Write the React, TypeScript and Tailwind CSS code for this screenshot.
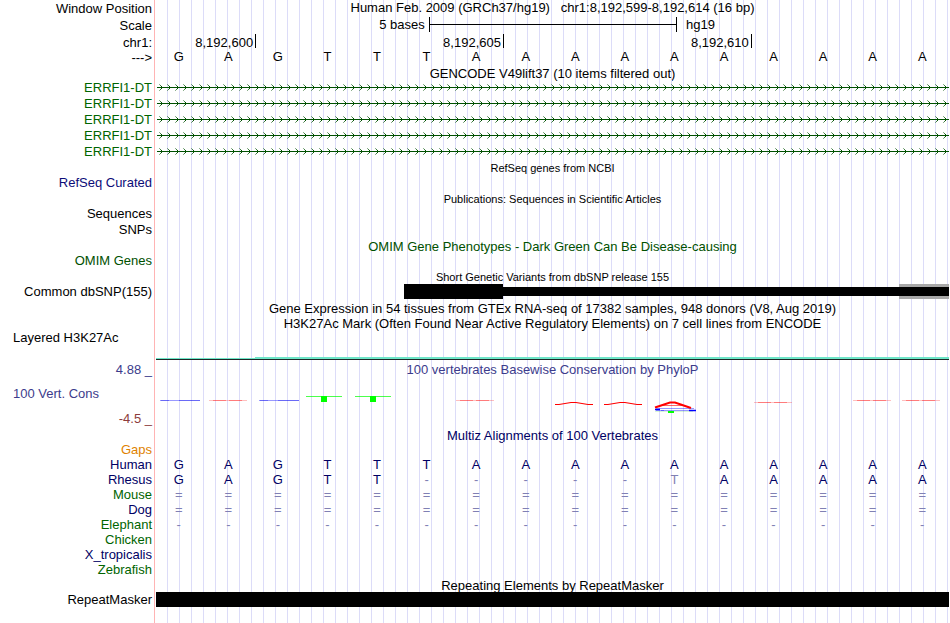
import React from 'react';
import clsx from 'clsx';

type BaseTone = 'black' | 'navy';

interface RowProps {
  label?: React.ReactNode;
  labelClass?: string;
  className?: string;
  children?: React.ReactNode;
}

interface Species {
  name: string;
  color: string;
  bases: string;
  faint?: number[];
}

const REFERENCE = 'GAGTTTAAAAAAAAAA';

const species: Species[] = [
  { name: 'Human', color: 'text-[#000064]', bases: REFERENCE },
  { name: 'Rhesus', color: 'text-[#000064]', bases: 'GAGTT-----TAAAAA', faint: [10] },
  { name: 'Mouse', color: 'text-[#006400]', bases: '================' },
  { name: 'Dog', color: 'text-[#000064]', bases: '================' },
  { name: 'Elephant', color: 'text-[#006400]', bases: '----------------' },
  { name: 'Chicken', color: 'text-[#006400]', bases: '' },
  { name: 'X_tropicalis', color: 'text-[#000064]', bases: '' },
  { name: 'Zebrafish', color: 'text-[#006400]', bases: '' },
];

const transcripts = ['tx1', 'tx2', 'tx3', 'tx4', 'tx5'];

// One label cell on the left, one track cell with the guide lines on the right
const Row: React.FC<RowProps> = ({
  label,
  labelClass = 'text-right',
  className = 'h-4 leading-4',
  children,
}) => (
  <div className={clsx('flex', className)}>
    <div className={clsx('w-[154px] shrink-0 pr-0.5 whitespace-nowrap', labelClass)}>{label}</div>
    <div className="flex min-w-0 flex-1 border-l border-[#ffb4b4] pl-px">
      <div className="min-w-0 flex-1 bg-[repeating-linear-gradient(90deg,transparent_0_11px,#dcdcf8_11px_12px)]">
        {children}
      </div>
    </div>
  </div>
);

const Title: React.FC<{
  children: React.ReactNode;
  small?: boolean;
  className?: string;
}> = ({ children, small, className }) => (
  <h2 className={clsx('text-center whitespace-nowrap', small && 'text-[11px]', className)}>
    {children}
  </h2>
);

const TitleRow: React.FC<{
  children: React.ReactNode;
  small?: boolean;
  color?: string;
  height?: string;
}> = ({ children, small, color, height = 'h-[15px] leading-[17px]' }) => (
  <Row className={height}>
    <Title small={small} className={color}>
      {children}
    </Title>
  </Row>
);

const Bases: React.FC<{ bases: string; tone: BaseTone; faint?: number[] }> = ({
  bases,
  tone,
  faint = [],
}) => (
  <div className="grid grid-cols-16 text-center">
    {bases.split('').map((base, i) => {
      const isFaint = base === '-' || base === '=' || faint.includes(i);
      return (
        <span
          key={i}
          className={clsx(
            'pr-1',
            tone === 'black' && 'text-black',
            tone === 'navy' && (isFaint ? 'text-[#8080b4]' : 'text-[#000064]')
          )}
        >
          {base}
        </span>
      );
    })}
  </div>
);

const Transcript: React.FC<{ id: string }> = ({ id }) => (
  <svg className="block h-4 w-full" shapeRendering="crispEdges" aria-hidden="true">
    <defs>
      <pattern id={id} width="8" height="16" patternUnits="userSpaceOnUse">
        <g fill="#005000">
          <path d="M6 7h1v1h-1z M5 6h1v1h-1z M5 8h1v1h-1z" />
          <path d="M4 5h1v1h-1z M4 9h1v1h-1z" fillOpacity="0.75" />
          <path d="M3 4h1v1h-1z M3 10h1v1h-1z" fillOpacity="0.45" />
        </g>
      </pattern>
    </defs>
    <rect width="100%" height="16" fill={`url(#${id})`} />
    <rect x="1" y="7" width="100%" height="1" fill="#005000" />
  </svg>
);

const Glyph: React.FC<{ children?: React.ReactNode }> = ({ children }) => (
  <svg className="block h-[51px] w-full overflow-visible" fill="none" aria-hidden="true">
    {children}
  </svg>
);

const FlatG = () => (
  <Glyph>
    <path d="M4 23.5h40" stroke="#0000ff" strokeOpacity="0.4" />
    <path d="M5 23.5h8 M23 23.5h21" stroke="#0000e0" strokeOpacity="0.3" />
  </Glyph>
);

const FlatA: React.FC<{ y?: number }> = ({ y = 23.5 }) => (
  <Glyph>
    <path d={`M3 ${y}h38`} stroke="#ff0000" strokeOpacity="0.25" />
    <path d={`M7 ${y}h13 M23 ${y}h13`} stroke="#ff0000" strokeOpacity="0.35" />
  </Glyph>
);

const LowT = () => (
  <Glyph>
    <path d="M1 19.5h36" stroke="#00ff00" strokeOpacity="0.7" />
    <path d="M16 19h6v6h-6z" fill="#00ff00" />
  </Glyph>
);

const LowA = () => (
  <Glyph>
    <path d="M2 27.5h4L18 25.5h5L35 27.5h5" stroke="#ff0000" strokeWidth="1.2" />
  </Glyph>
);

// Stacked A / C / T
const StackedA = () => (
  <Glyph>
    <path d="M3 34.5h38" stroke="#00c000" strokeOpacity="0.15" />
    <path d="M16 34h6v2h-6z" fill="#00ff00" />
    <path d="M4 31.5h38 M9 33.5h30 M4 33.5h8" stroke="#0000ff" strokeOpacity="0.4" />
    <path d="M3 32.5h5 M37 33.5h7" stroke="#0000ff" strokeWidth="1.5" />
    <path d="M11 28.5h20" stroke="#ff0000" strokeOpacity="0.6" />
    <path d="M3 30.5 18 25.5h5L39 31" stroke="#ff0000" strokeWidth="2" />
  </Glyph>
);

const App: React.FC = () => {
  return (
    <main className="flex min-h-screen flex-col bg-white pr-px font-['Liberation_Sans',Arial,sans-serif] text-[13px] text-black">
      <Row label="Window Position" className="h-[17px] leading-[18px]">
        <Title className="leading-4">
          Human Feb. 2009 (GRCh37/hg19)&nbsp;&nbsp; chr1:8,192,599-8,192,614 (16 bp)
        </Title>
      </Row>
      <Row label="Scale" className="h-[17px] leading-[18px]">
        <div className="flex leading-4">
          <span className="w-[34.4%] pr-1 text-right">5 bases</span>
          <div className="h-[15px] w-[31.3%] border-x border-black pt-[7px]">
            <div className="h-px bg-black" />
          </div>
          <span className="pl-[9px]">hg19</span>
        </div>
      </Row>
      <Row label="chr1:" className="h-4 leading-[17px]">
        <div className="grid grid-cols-16 grid-rows-[14px] text-right">
          <span className="col-span-2 pr-0.5">8,192,600</span>
          <span className="col-span-5 border-l border-black pr-0.5">8,192,605</span>
          <span className="col-span-5 border-l border-black pr-0.5">8,192,610</span>
          <span className="col-span-4 border-l border-black" />
        </div>
      </Row>
      <Row label="--->" className="h-4 leading-4">
        <div className="leading-[14px]">
          <Bases bases={REFERENCE} tone="black" />
        </div>
      </Row>

      {/* GENCODE */}
      <TitleRow height="h-3.5 leading-4">GENCODE V49lift37 (10 items filtered out)</TitleRow>
      {transcripts.map((id) => (
        <Row key={id} label="ERRFI1-DT" labelClass="text-right text-[#006400]">
          <Transcript id={id} />
        </Row>
      ))}

      {/* RefSeq and publications */}
      <TitleRow small>RefSeq genes from NCBI</TitleRow>
      <Row label="RefSeq Curated" labelClass="text-right text-[#0c0c78]" />
      <TitleRow small>Publications: Sequences in Scientific Articles</TitleRow>
      <Row label="Sequences" />
      <Row label="SNPs" />

      {/* Variants */}
      <TitleRow color="text-[#005000]">
        OMIM Gene Phenotypes - Dark Green Can Be Disease-causing
      </TitleRow>
      <Row label="OMIM Genes" labelClass="text-right text-[#005000]" />
      <TitleRow small>Short Genetic Variants from dbSNP release 155</TitleRow>
      <Row label="Common dbSNP(155)">
        <div className="grid h-[15px] grid-cols-16 items-center">
          <div className="col-span-2 col-start-6 h-full bg-black" />
          <div className="col-span-8 h-[9px] bg-black" />
          <div className="h-full bg-[#a8a8a8] py-[3px]">
            <div className="h-full bg-black" />
          </div>
        </div>
      </Row>

      {/* Expression and regulation */}
      <TitleRow>
        Gene Expression in 54 tissues from GTEx RNA-seq of 17382 samples, 948 donors (V8, Aug 2019)
      </TitleRow>
      <TitleRow>
        H3K27Ac Mark (Often Found Near Active Regulatory Elements) on 7 cell lines from ENCODE
      </TitleRow>
      <Row label="Layered H3K27Ac" labelClass="pl-[13px] text-left" className="h-8 leading-4">
        <div className="flex h-[30px] flex-col justify-end">
          <div className="grid grid-cols-16 items-end border-b border-[#202828]">
            <div className="col-span-2 h-px bg-[#6ee6c8]" />
            <div className="col-span-14 h-0.5 bg-[#6ee6c8]" />
          </div>
        </div>
      </Row>

      {/* Conservation */}
      <Row label="4.88 _" labelClass="text-right text-[#3c3c8c]" className="h-[15px] leading-[15px]">
        <Title className="text-[#3c3c8c]">100 vertebrates Basewise Conservation by PhyloP</Title>
      </Row>
      <Row
        className="h-[51px] leading-4"
        label={
          <div className="flex h-full flex-col justify-between pt-[9px] pb-px">
            <span className="pl-[13px] text-left text-[#3c3c8c]">100 Vert. Cons</span>
            <span className="text-right text-[#8c3c3c]">-4.5 _</span>
          </div>
        }
      >
        <div className="grid grid-cols-16">
          <FlatG />
          <FlatA />
          <FlatG />
          <LowT />
          <LowT />
          <Glyph />
          <FlatA />
          <Glyph />
          <LowA />
          <LowA />
          <StackedA />
          <Glyph />
          <FlatA y={25.5} />
          <Glyph />
          <FlatA />
          <FlatA />
        </div>
      </Row>
      <TitleRow color="text-[#000064]" height="h-3.5 leading-4">
        Multiz Alignments of 100 Vertebrates
      </TitleRow>
      <Row label="Gaps" labelClass="text-right text-[#e08200]" className="h-[15px] leading-[15px]" />
      {species.map((s) => (
        <Row
          key={s.name}
          label={s.name}
          labelClass={clsx('text-right', s.color)}
          className="h-[15px] leading-[15px]"
        >
          <Bases bases={s.bases} tone="navy" faint={s.faint} />
        </Row>
      ))}

      {/* Repeats */}
      <TitleRow>Repeating Elements by RepeatMasker</TitleRow>
      <Row label="RepeatMasker" className="h-[15px] leading-[15px]">
        <div className="h-full bg-black" />
      </Row>
      <Row className="flex-1" />
    </main>
  );
};

export default App;
